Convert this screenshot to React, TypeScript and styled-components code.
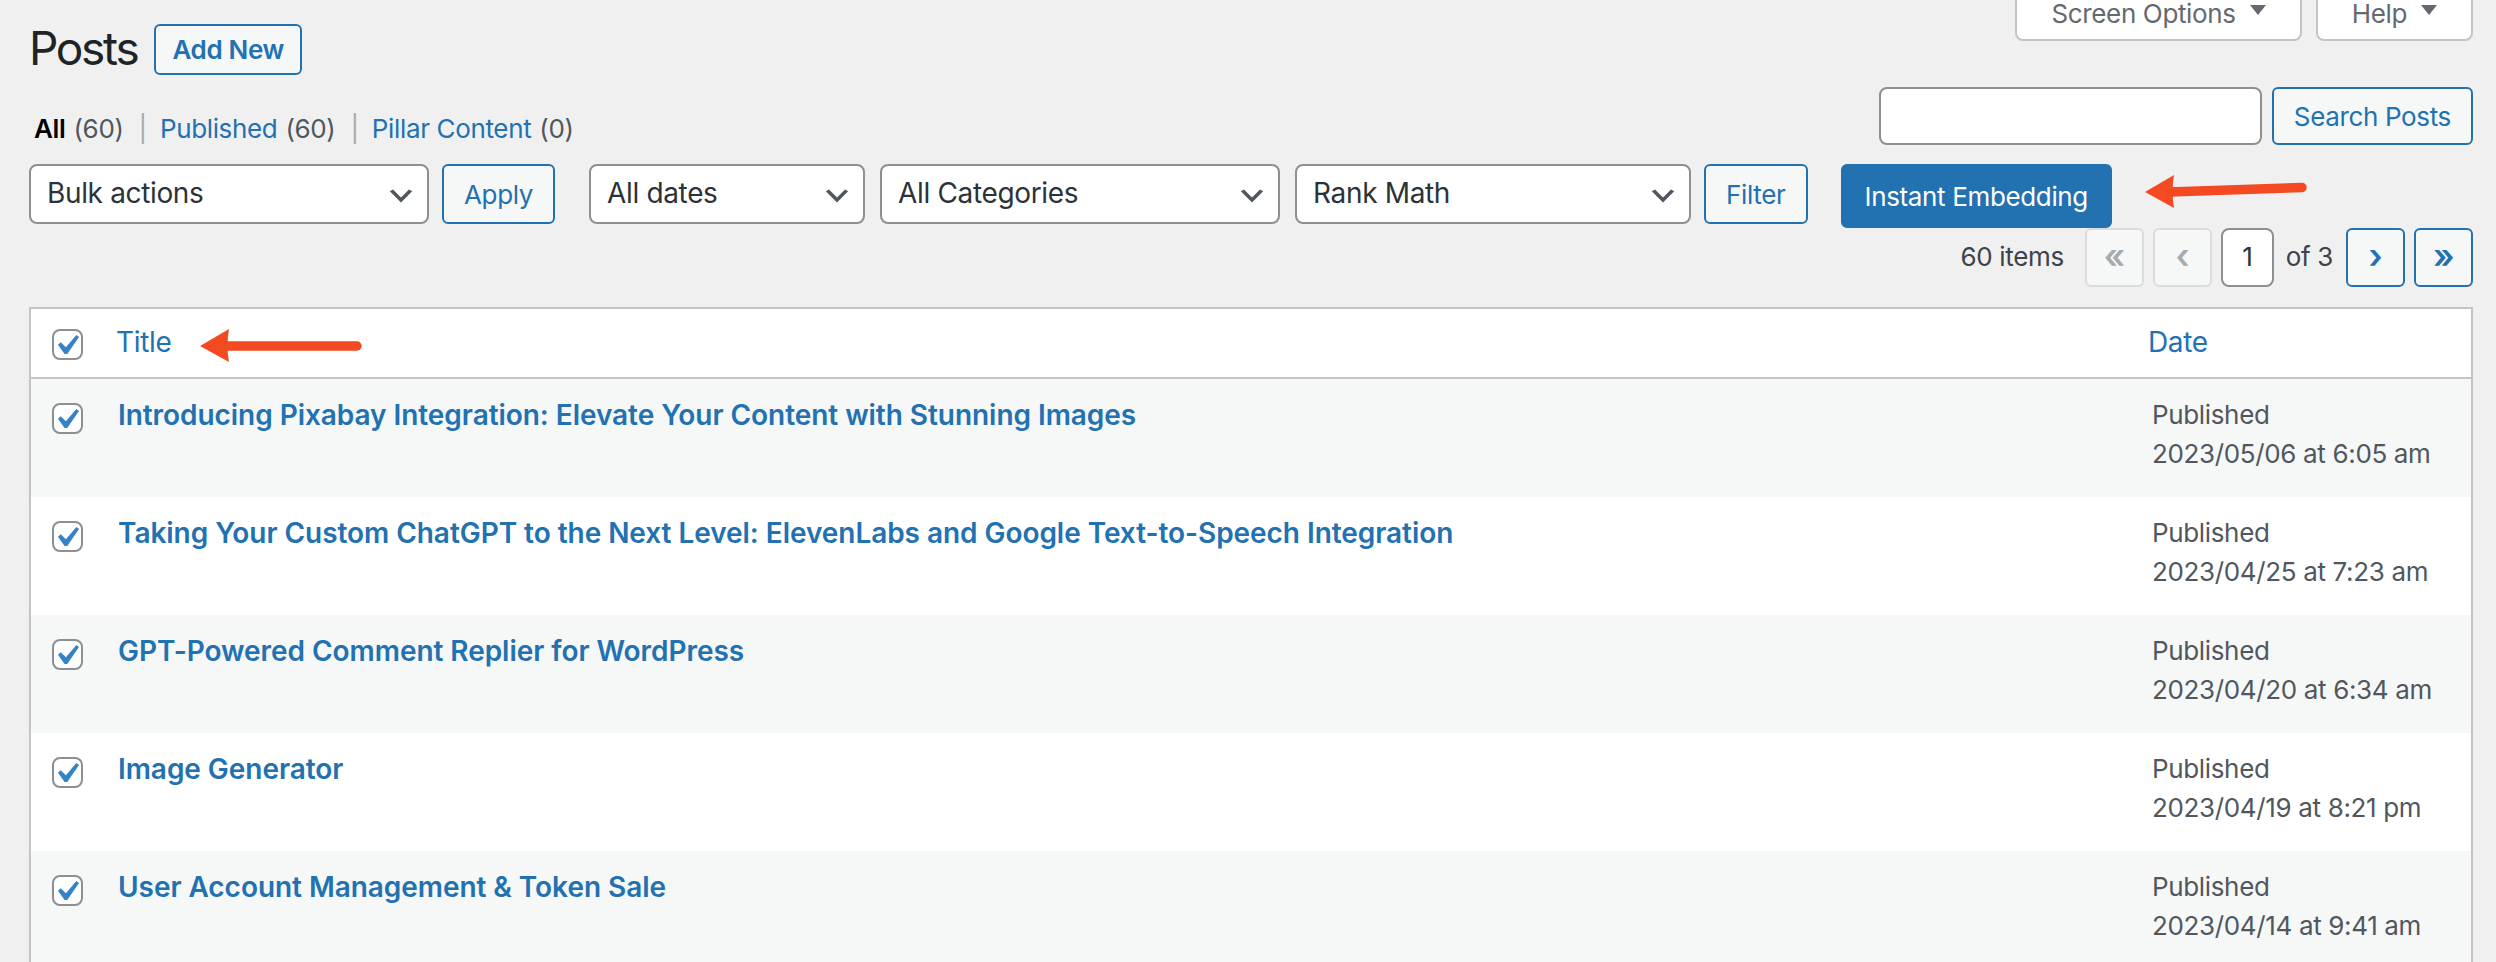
import styled, { createGlobalStyle } from 'styled-components'

const GlobalStyle = createGlobalStyle`
  * {
    box-sizing: border-box;
  }

  body {
    margin: 0;
    background: #f0f0f1;
    color: #3c434a;
    font-family: Inter, "Noto Sans", sans-serif;
    font-size: 26px;
    line-height: 1.4;
    letter-spacing: -0.35px;
  }
`

const Page = styled.div`
  height: 962px;
  overflow: hidden;
  padding: 0 23px 0 29px;
`

const Header = styled.div`
  display: flex;
  justify-content: space-between;
  align-items: flex-start;
`

const TitleRow = styled.div`
  display: flex;
  align-items: flex-start;
`

const Heading = styled.h1`
  margin: 18px 17px 0 0;
  font-size: 46px;
  font-weight: 400;
  line-height: 60px;
  letter-spacing: -2.3px;
  color: #1d2327;
`

const Button = styled.button<{ $primary?: boolean; $h?: number }>`
  display: inline-flex;
  align-items: center;
  justify-content: center;
  flex-shrink: 0;
  height: ${p => p.$h ?? 60}px;
  padding: 0 20px;
  border: 2px solid #2271b1;
  border-radius: 6px;
  background: ${p => (p.$primary ? '#2271b1' : '#f6f7f7')};
  color: ${p => (p.$primary ? '#fff' : '#2271b1')};
  font-family: inherit;
  font-size: 26px;
  letter-spacing: inherit;
  white-space: nowrap;
  cursor: pointer;
`

const AddNew = styled(Button)`
  margin-top: 24px;
  padding: 0 16px;
  font-weight: 600;
`

const Tabs = styled.div`
  display: flex;
  gap: 14px;
`

const Tab = styled.button`
  display: flex;
  align-items: flex-start;
  gap: 14px;
  height: 41px;
  padding: 1px 34px 0;
  border: 2px solid #c3c4c7;
  border-top: none;
  border-radius: 0 0 8px 8px;
  background: #fff;
  color: #646970;
  font-family: inherit;
  font-size: 26px;
  line-height: 26px;
  letter-spacing: inherit;
`

const TabArrow = styled.svg`
  margin-top: 4px;
`

const SubRow = styled.div`
  display: flex;
  justify-content: space-between;
  align-items: flex-start;
`

const Views = styled.div`
  display: flex;
  align-items: baseline;
  margin: 31px 0 0 5px;
  line-height: 39px;
  color: #646970;
  white-space: pre;
`

const ViewLink = styled.a<{ $current?: boolean }>`
  color: ${p => (p.$current ? '#000' : '#2271b1')};
  font-weight: ${p => (p.$current ? 600 : 400)};
  text-decoration: none;
`

const Count = styled.span`
  margin-left: 8px;
  color: #50575e;
`

const Sep = styled.span`
  margin: 0 13px 0 15px;
  color: #a7aaad;
`

const SearchBox = styled.div`
  display: flex;
  gap: 10px;
  margin-top: 9px;
`

const SearchInput = styled.input`
  width: 383px;
  height: 58px;
  border: 2px solid #8c8f94;
  border-radius: 8px;
  background: #fff;
`

const ActionsRow = styled.div`
  display: flex;
  align-items: flex-start;
  margin-top: 16px;
`

const Spaced = styled.div<{ $ml?: number; $mt?: number }>`
  display: flex;
  margin-left: ${p => p.$ml ?? 0}px;
  margin-top: ${p => p.$mt ?? 0}px;
`

const Select = styled.div<{ $w: number }>`
  display: flex;
  align-items: center;
  justify-content: space-between;
  flex-shrink: 0;
  width: ${p => p.$w}px;
  height: 60px;
  padding: 0 10px 0 16px;
  border: 2px solid #8c8f94;
  border-radius: 8px;
  background: #fff;
  color: #2c3338;
  font-size: 28px;
`

const Chevron = styled.svg`
  margin-top: 3px;
`

const PagesRow = styled.div`
  display: flex;
  justify-content: flex-end;
  align-items: center;
  gap: 9px;
  height: 59px;
`

const DisplayNum = styled.span`
  margin-right: 12px;
  color: #3c434a;
`

const PageButton = styled.span<{ $disabled?: boolean }>`
  display: flex;
  align-items: center;
  justify-content: center;
  width: 59px;
  height: 59px;
  border: 2px solid ${p => (p.$disabled ? '#dcdcde' : '#2271b1')};
  border-radius: 6px;
  background: #f6f7f7;
  color: ${p => (p.$disabled ? '#a7aaad' : '#2271b1')};
  font-size: 34px;
  font-weight: 600;
  line-height: 1;
  padding-bottom: 4px;
`

const PageInput = styled.span`
  display: flex;
  align-items: center;
  justify-content: center;
  width: 53px;
  height: 59px;
  border: 2px solid #8c8f94;
  border-radius: 8px;
  background: #fff;
  color: #2c3338;
`

const OfTotal = styled.span`
  margin: 0 4px 0 3px;
`

const Table = styled.div`
  margin-top: 20px;
  border: 2px solid #c3c4c7;
  background: #fff;
  box-shadow: 0 2px 2px rgba(0, 0, 0, 0.04);
`

const HeadRow = styled.div`
  display: grid;
  grid-template-columns: 85px 1fr 343px;
  align-items: center;
  height: 70px;
  border-bottom: 2px solid #c3c4c7;
  font-size: 28px;
`

const Row = styled.div<{ $alt: boolean }>`
  display: grid;
  grid-template-columns: 85px 1fr 343px;
  align-items: start;
  height: 118px;
  background: ${p => (p.$alt ? '#f6f7f7' : '#fff')};
`

const CheckCell = styled.div<{ $top?: number }>`
  padding: ${p => p.$top ?? 0}px 0 0 21px;
`

const Checkbox = styled.span`
  display: flex;
  width: 31px;
  height: 31px;
  border: 2px solid #8c8f94;
  border-radius: 8px;
  background: #fff;
`

const HeadTitle = styled.div`
  display: flex;
  align-items: center;
`

const SortLink = styled.a`
  color: #2271b1;
  text-decoration: none;
`

const NoteArrow = styled.svg<{ $ml: number; $mt?: number }>`
  flex-shrink: 0;
  margin-left: ${p => p.$ml}px;
  margin-top: ${p => p.$mt ?? 0}px;
`

const HeadDate = styled.div`
  padding-left: 20px;
`

const TitleCell = styled.div`
  padding: 17px 0 0 2px;
  line-height: 39px;
`

const RowTitle = styled.a`
  color: #2271b1;
  font-size: 28px;
  font-weight: 600;
  letter-spacing: -0.05px;
  text-decoration: none;
`

const DateCell = styled.div`
  padding: 16px 0 0 24px;
  line-height: 39px;
  color: #50575e;
`

const posts = [
  {
    title: 'Introducing Pixabay Integration: Elevate Your Content with Stunning Images',
    date: '2023/05/06 at 6:05 am',
  },
  {
    title: 'Taking Your Custom ChatGPT to the Next Level: ElevenLabs and Google Text-to-Speech Integration',
    date: '2023/04/25 at 7:23 am',
  },
  { title: 'GPT-Powered Comment Replier for WordPress', date: '2023/04/20 at 6:34 am' },
  { title: 'Image Generator', date: '2023/04/19 at 8:21 pm' },
  { title: 'User Account Management & Token Sale', date: '2023/04/14 at 9:41 am' },
]

const Check = () => (
  <Checkbox>
    <svg width="27" height="27" viewBox="3.81 2.86 13.33 13.33">
      <path d="M14.83 4.89l1.34.94-5.81 8.38H9.02L5.78 9.67l1.34-1.25 2.58 2.41z" fill="#3582c4" />
    </svg>
  </Checkbox>
)

const Dropdown = ({ label, w }: { label: string; w: number }) => (
  <Select $w={w}>
    <span>{label}</span>
    <Chevron width="32" height="32" viewBox="0 0 20 20">
      <path d="M5 6l5 5 5-5 2 1-7 7-7-7 2-1z" fill="#50575e" />
    </Chevron>
  </Select>
)

// red annotation arrow, tip on the left
const Arrow = ({ ml, mt, tilt = 0 }: { ml: number; mt?: number; tilt?: number }) => (
  <NoteArrow $ml={ml} $mt={mt} width="162" height="34" viewBox="0 0 162 34">
    <line x1="24" y1="17" x2="157" y2={17 - tilt} stroke="#f44a22" strokeWidth="9.5" strokeLinecap="round" />
    <path d="M0 17 L29 0 Q26 17 29 33 Z" fill="#f44a22" />
  </NoteArrow>
)

export default function App() {
  return (
    <>
      <GlobalStyle />
      <Page>
        <Header>
          <TitleRow>
            <Heading>Posts</Heading>
            <AddNew $h={51}>Add New</AddNew>
          </TitleRow>
          <Tabs>
            <Tab>
              Screen Options
              <TabArrow width="16" height="10" viewBox="0 0 16 10">
                <path d="M0 0h16L8 10z" fill="#646970" />
              </TabArrow>
            </Tab>
            <Tab>
              Help
              <TabArrow width="16" height="10" viewBox="0 0 16 10">
                <path d="M0 0h16L8 10z" fill="#646970" />
              </TabArrow>
            </Tab>
          </Tabs>
        </Header>

        <SubRow>
          <Views>
            <ViewLink $current>All</ViewLink>
            <Count>(60)</Count>
            <Sep>|</Sep>
            <ViewLink>Published</ViewLink>
            <Count>(60)</Count>
            <Sep>|</Sep>
            <ViewLink>Pillar Content</ViewLink>
            <Count>(0)</Count>
          </Views>
          <SearchBox>
            <SearchInput />
            <Button $h={58}>Search Posts</Button>
          </SearchBox>
        </SubRow>

        <ActionsRow>
          <Dropdown label="Bulk actions" w={400} />
          <Spaced $ml={13}>
            <Button>Apply</Button>
          </Spaced>
          <Spaced $ml={34}>
            <Dropdown label="All dates" w={276} />
          </Spaced>
          <Spaced $ml={15}>
            <Dropdown label="All Categories" w={400} />
          </Spaced>
          <Spaced $ml={15}>
            <Dropdown label="Rank Math" w={396} />
          </Spaced>
          <Spaced $ml={13}>
            <Button>Filter</Button>
          </Spaced>
          <Spaced $ml={33}>
            <Button $primary $h={64} style={{ padding: '0 22px' }}>
              Instant Embedding
            </Button>
          </Spaced>
          <Arrow ml={33} mt={11} tilt={4.5} />
        </ActionsRow>

        <PagesRow>
          <DisplayNum>60 items</DisplayNum>
          <PageButton $disabled>«</PageButton>
          <PageButton $disabled>‹</PageButton>
          <PageInput>1</PageInput>
          <OfTotal>of 3</OfTotal>
          <PageButton>›</PageButton>
          <PageButton>»</PageButton>
        </PagesRow>

        <Table>
          <HeadRow>
            <CheckCell $top={3}>
              <Check />
            </CheckCell>
            <HeadTitle>
              <SortLink>Title</SortLink>
              <Arrow ml={29} mt={6} />
            </HeadTitle>
            <HeadDate>
              <SortLink>Date</SortLink>
            </HeadDate>
          </HeadRow>
          {posts.map((post, i) => (
            <Row key={post.title} $alt={i % 2 === 0}>
              <CheckCell $top={24}>
                <Check />
              </CheckCell>
              <TitleCell>
                <RowTitle>{post.title}</RowTitle>
              </TitleCell>
              <DateCell>
                Published
                <br />
                {post.date}
              </DateCell>
            </Row>
          ))}
        </Table>
      </Page>
    </>
  )
}
